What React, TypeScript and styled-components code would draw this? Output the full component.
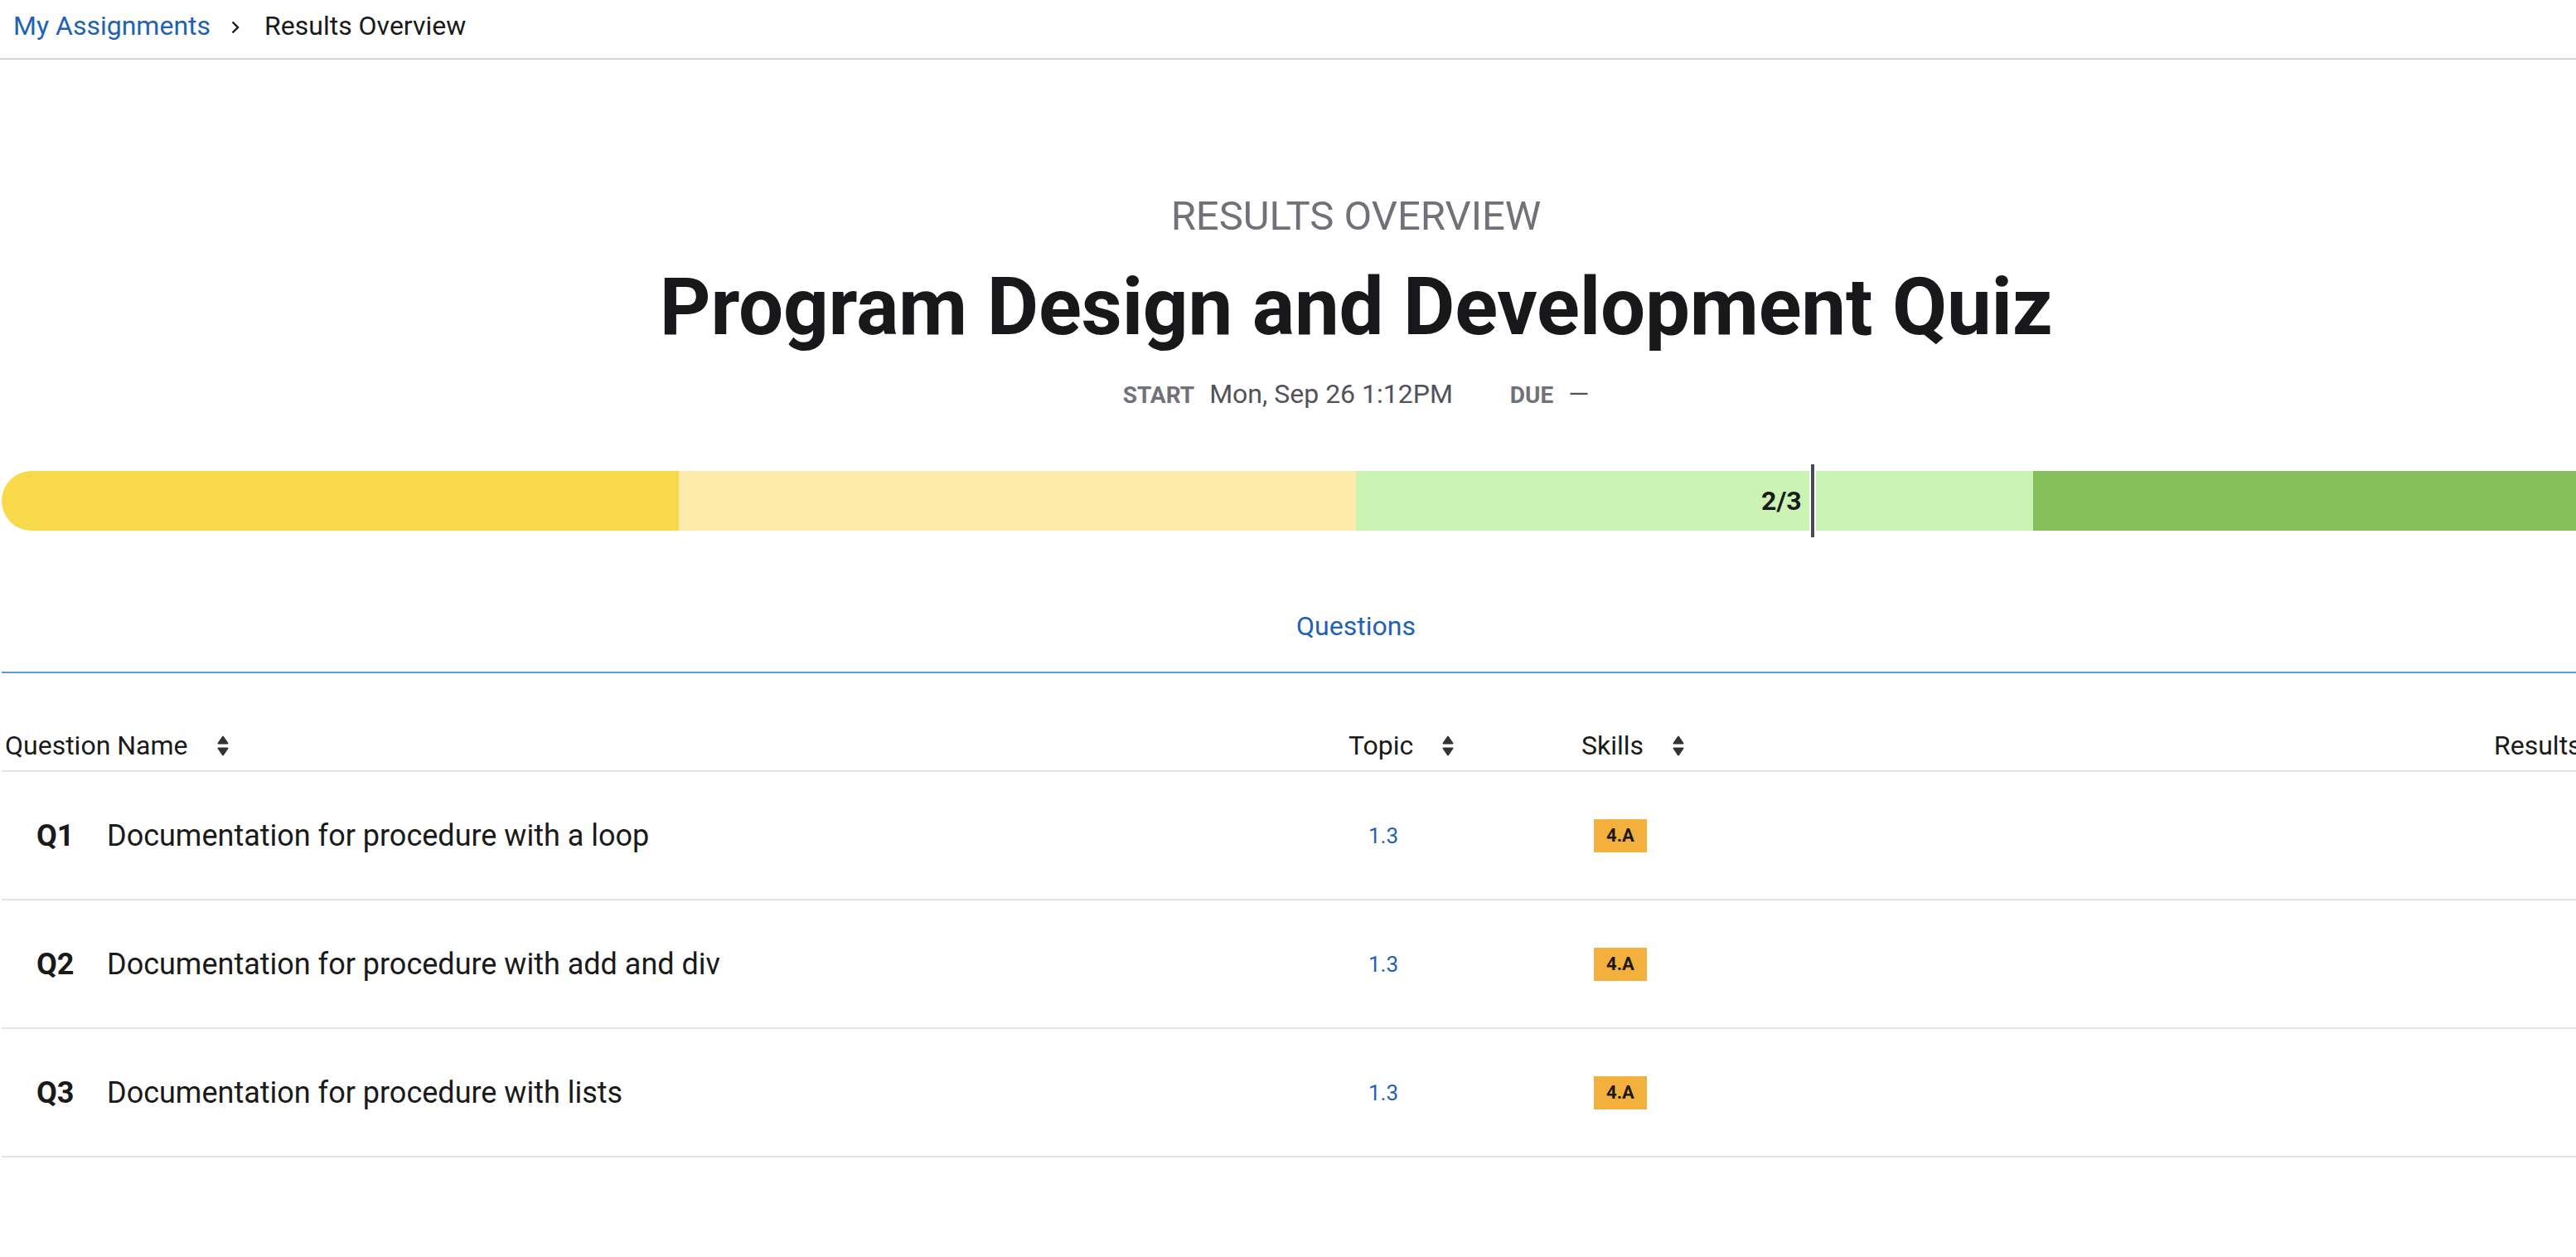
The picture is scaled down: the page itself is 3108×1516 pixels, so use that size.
import React from 'react';
import styled, { createGlobalStyle } from 'styled-components';

const GlobalStyle = createGlobalStyle`
  html, body {
    margin: 0;
    padding: 0;
    background: #ffffff;
    font-family: Roboto, "Liberation Sans", Arial, sans-serif;
    color: #1a1a1a;
    overflow: hidden;
  }
  * {
    box-sizing: border-box;
  }
`;

const Breadcrumbs = styled.nav`
  display: flex;
  align-items: center;
  padding: 15px 16px 23px;
  border-bottom: 2px solid #d4d4d8;
  font-size: 32px;
  line-height: 1;
`;

const CrumbLink = styled.a`
  color: #2161b5;
  text-decoration: none;
`;

const CrumbCurrent = styled.span`
  color: #1a1a1a;
`;

const CrumbSeparator = styled.svg`
  width: 12px;
  height: 16px;
  margin: 4px 29px 0 24px;
  flex-shrink: 0;
`;

const Main = styled.main`
  width: 3268px;
  margin-left: 2px;
`;

const Hero = styled.section`
  display: flex;
  flex-direction: column;
  align-items: center;
  padding-top: 164px;
`;

const Overline = styled.div`
  font-size: 49px;
  line-height: 1;
  color: #71717a;
  text-transform: uppercase;
`;

const Title = styled.h1`
  margin: 37px 0 0;
  font-size: 96px;
  line-height: 1;
  font-weight: 700;
  letter-spacing: -0.2px;
  color: #18181b;
`;

const Meta = styled.div`
  display: flex;
  align-items: baseline;
  margin-top: 41px;
  line-height: 1;
`;

const MetaItem = styled.div`
  display: flex;
  align-items: baseline;
  gap: 18px;

  & + & {
    margin-left: 69px;
  }
`;

const MetaLabel = styled.span`
  font-size: 28px;
  font-weight: 700;
  color: #71717a;
  text-transform: uppercase;
`;

const MetaValue = styled.span`
  font-size: 32px;
  color: #52525b;
`;

const Bar = styled.div`
  position: relative;
  display: flex;
  height: 72px;
  margin-top: 77px;
`;

const Segment = styled.div<{ $color: string; $first?: boolean; $last?: boolean }>`
  flex: 1;
  background: ${(p) => p.$color};
  border-radius: ${(p) => (p.$first ? '36px 0 0 36px' : p.$last ? '0 36px 36px 0' : '0')};
`;

const Marker = styled.div`
  position: absolute;
  top: -8px;
  bottom: -8px;
  width: 8px;
  margin-left: 2px;
  background: #4b4b55;
  border-left: 2px solid #ffffff;
  border-right: 2px solid #ffffff;
`;

const MarkerLabel = styled.span`
  position: absolute;
  right: calc(100% + 11px);
  top: 50%;
  transform: translateY(-50%);
  font-size: 32px;
  font-weight: 700;
  line-height: 1;
  color: #1a1a1a;
  white-space: nowrap;
`;

const TabList = styled.div`
  display: flex;
  justify-content: center;
  margin-top: 99px;
  border-bottom: 2px solid #5b9bd5;
`;

const Tab = styled.button<{ $active?: boolean }>`
  border: none;
  background: none;
  padding: 0 0 39px;
  font-family: inherit;
  font-size: 32px;
  line-height: 1;
  color: ${(p) => (p.$active ? '#2161b5' : '#52525b')};
  cursor: pointer;
`;

const columns = '1625px 281px 1101px 1fr';

const HeaderRow = styled.div`
  display: grid;
  grid-template-columns: ${columns};
  padding: 71px 0 14px;
  border-bottom: 2px solid #e4e4e7;
`;

const HeaderCell = styled.div<{ $pad?: number }>`
  display: flex;
  align-items: center;
  gap: 35px;
  padding-left: ${(p) => p.$pad ?? 0}px;
  font-size: 32px;
  line-height: 1;
  color: #1a1a1a;
  white-space: nowrap;
`;

const SortIcon = styled.svg`
  width: 14px;
  height: 25px;
  flex-shrink: 0;
`;

const Row = styled.div`
  display: grid;
  grid-template-columns: ${columns};
  align-items: center;
  height: 155px;
  border-bottom: 2px solid #e4e4e7;
`;

const NameCell = styled.div`
  display: flex;
  align-items: baseline;
  padding-left: 42px;
  font-size: 36px;
  line-height: 1;
  color: #1a1a1a;
`;

const QNum = styled.span`
  width: 85px;
  font-weight: 700;
`;

const Cell = styled.div<{ $pad: number }>`
  padding-left: ${(p) => p.$pad}px;
`;

const TopicLink = styled.a`
  font-size: 26px;
  color: #2161b5;
  text-decoration: none;
`;

const SkillBadge = styled.span`
  display: inline-flex;
  align-items: center;
  justify-content: center;
  width: 64px;
  height: 40px;
  background: #f3b03c;
  font-size: 22px;
  font-weight: 700;
  color: #1a1a1a;
`;

const Sort = () => (
  <SortIcon viewBox="0 0 14 25" fill="#333333" stroke="#333333" strokeWidth="2" strokeLinejoin="round">
    <path d="M7 1.5 L12.5 9.5 H1.5 Z" />
    <path d="M1.5 15.5 H12.5 L7 23.5 Z" />
  </SortIcon>
);

const segments = ['#f8d94a', '#fcebaa', '#cbf3b3', '#84bf5c'];

const questions = [
  { id: 'Q1', name: 'Documentation for procedure with a loop', topic: '1.3', skill: '4.A' },
  { id: 'Q2', name: 'Documentation for procedure with add and div', topic: '1.3', skill: '4.A' },
  { id: 'Q3', name: 'Documentation for procedure with lists', topic: '1.3', skill: '4.A' },
];

const score = 2 / 3;

export default function App() {
  return (
    <>
      <GlobalStyle />
      <Breadcrumbs>
        <CrumbLink href="#">My Assignments</CrumbLink>
        <CrumbSeparator viewBox="0 0 12 16" fill="none" stroke="#1a1a1a" strokeWidth="2.4">
          <path d="M2.5 1.5 L9 8 L2.5 14.5" />
        </CrumbSeparator>
        <CrumbCurrent>Results Overview</CrumbCurrent>
      </Breadcrumbs>

      <Main>
        <Hero>
          <Overline>Results Overview</Overline>
          <Title>Program Design and Development Quiz</Title>
          <Meta>
            <MetaItem>
              <MetaLabel>Start</MetaLabel>
              <MetaValue>Mon, Sep 26 1:12PM</MetaValue>
            </MetaItem>
            <MetaItem>
              <MetaLabel>Due</MetaLabel>
              <MetaValue>—</MetaValue>
            </MetaItem>
          </Meta>
        </Hero>

        <Bar>
          {segments.map((c, i) => (
            <Segment key={c} $color={c} $first={i === 0} $last={i === segments.length - 1} />
          ))}
          <Marker style={{ left: `${score * 100}%` }}>
            <MarkerLabel>2/3</MarkerLabel>
          </Marker>
        </Bar>

        <TabList>
          <Tab $active>Questions</Tab>
        </TabList>

        <HeaderRow>
          <HeaderCell $pad={4}>
            Question Name <Sort />
          </HeaderCell>
          <HeaderCell>
            Topic <Sort />
          </HeaderCell>
          <HeaderCell>
            Skills <Sort />
          </HeaderCell>
          <HeaderCell>Results</HeaderCell>
        </HeaderRow>

        {questions.map((q) => (
          <Row key={q.id}>
            <NameCell>
              <QNum>{q.id}</QNum>
              {q.name}
            </NameCell>
            <Cell $pad={24}>
              <TopicLink href="#">{q.topic}</TopicLink>
            </Cell>
            <Cell $pad={15}>
              <SkillBadge>{q.skill}</SkillBadge>
            </Cell>
            <Cell $pad={0} />
          </Row>
        ))}
      </Main>
    </>
  );
}
